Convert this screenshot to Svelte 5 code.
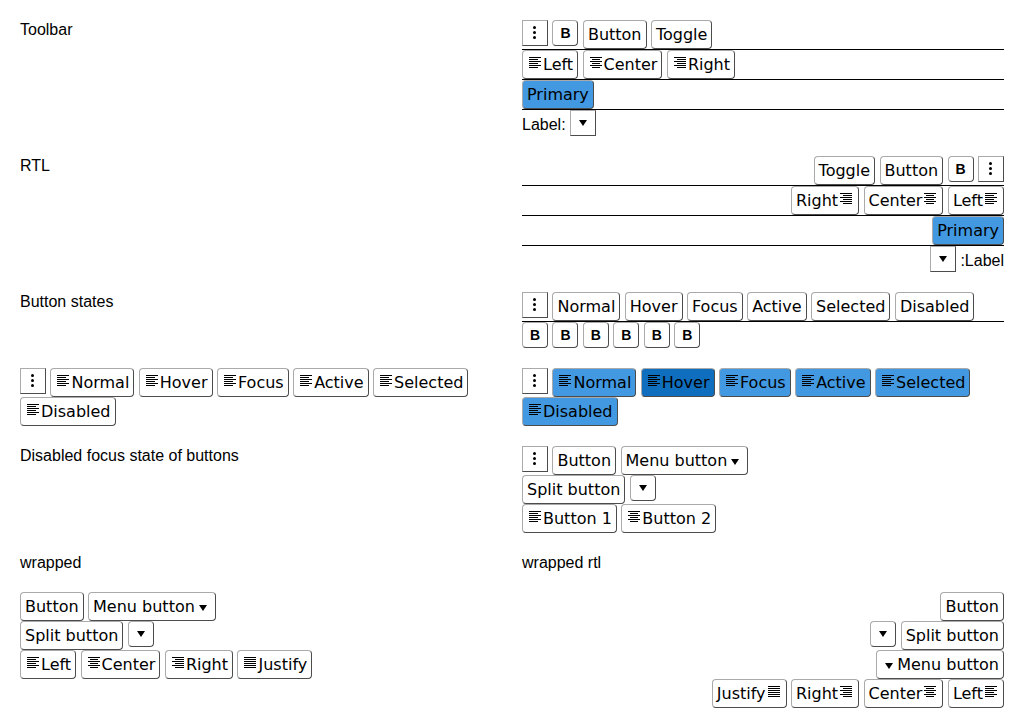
<script>
  const states = ['Normal', 'Hover', 'Focus', 'Active', 'Selected', 'Disabled'];
  const aligns = ['Left', 'Center', 'Right'];

  // Start and length of each line of the alignment icons.
  const lines = {
    left: [[2, 12], [2, 9], [2, 12], [2, 9], [2, 12], [2, 9]],
    center: [[2, 12], [4, 8], [2, 12], [4, 8], [2, 12], [4, 8]],
    right: [[2, 12], [5, 9], [2, 12], [5, 9], [2, 12], [5, 9]],
    justify: [[2, 12], [2, 12], [2, 12], [2, 12], [2, 12], [2, 12]]
  };
</script>

{#snippet icon(name)}
  <svg class="icon" viewBox="0 0 16 16" aria-hidden="true">
    {#if name === 'more'}
      <circle cx="7.5" cy="2.5" r="1.5" />
      <circle cx="7.5" cy="7.5" r="1.5" />
      <circle cx="7.5" cy="12.5" r="1.5" />
    {:else if name === 'caret'}
      <path d="M4 5h8l-4 6z" />
    {:else}
      {#each lines[name] as [x, w], i}
        <rect {x} y={2 + i * 2} width={w} height="1" />
      {/each}
    {/if}
  </svg>
{/snippet}

{#snippet btn(text, name = '', kind = '')}
  <button type="button" class={kind}>{#if name}{@render icon(name)}{/if}{text}</button>{' '}
{/snippet}

{#snippet more()}
  <button type="button" class="square" aria-label="More">{@render icon('more')}</button>{' '}
{/snippet}

{#snippet bold()}
  <button type="button" class="bold">B</button>{' '}
{/snippet}

{#snippet menu()}
  <button type="button" class="menu" aria-haspopup="menu">Menu button{@render icon('caret')}</button>{' '}
{/snippet}

{#snippet split()}
  {@render btn('Split button')}
  <button type="button" aria-label="Open split menu">{@render icon('caret')}</button>
{/snippet}

{#snippet toolbar(dir, id)}
  <div class="toolbar ruled" role="toolbar" {dir}>
    <div class="line">{@render more()}{@render bold()}{@render btn('Button')}{@render btn('Toggle')}</div>
    <div class="line">
      {#each aligns as a}{@render btn(a, a.toLowerCase())}{/each}
    </div>
    <div class="line">{@render btn('Primary', '', 'primary')}</div>
    <div class="line"><label for={id}>Label:</label>{' '}<select {id}><option></option></select></div>
  </div>
{/snippet}

<main>
  <div>Toolbar</div>
  {@render toolbar('ltr', 'select-ltr')}

  <div>RTL</div>
  {@render toolbar('rtl', 'select-rtl')}

  <div>Button states</div>
  <div class="toolbar ruled" role="toolbar">
    <div class="line">
      {@render more()}
      {#each states as s}{@render btn(s)}{/each}
    </div>
    <div class="line">
      {#each states as s}{@render bold()}{/each}
    </div>
  </div>

  <div class="toolbar" role="toolbar">
    <div class="line">
      {@render more()}
      {#each states as s}{@render btn(s, 'left')}{/each}
    </div>
  </div>
  <div class="toolbar" role="toolbar">
    <div class="line">
      {@render more()}
      {#each states as s}{@render btn(s, 'left', s === 'Hover' ? 'primary hover' : 'primary')}{/each}
    </div>
  </div>

  <div>Disabled focus state of buttons</div>
  <div class="toolbar" role="toolbar">
    <div class="line">{@render more()}{@render btn('Button')}{@render menu()}</div>
    <div class="line">{@render split()}</div>
    <div class="line">{@render btn('Button 1', 'left')}{@render btn('Button 2', 'center')}</div>
  </div>

  <div>wrapped</div>
  <div>wrapped rtl</div>

  <div class="toolbar" role="toolbar">
    <div class="line">{@render btn('Button')}{@render menu()}</div>
    <div class="line">{@render split()}</div>
    <div class="line">
      {#each [...aligns, 'Justify'] as a}{@render btn(a, a.toLowerCase())}{/each}
    </div>
  </div>
  <div class="toolbar" role="toolbar" dir="rtl">
    <div class="line">{@render btn('Button')}</div>
    <div class="line">{@render split()}</div>
    <div class="line">{@render menu()}</div>
    <div class="line">
      {#each [...aligns, 'Justify'] as a}{@render btn(a, a.toLowerCase())}{/each}
    </div>
  </div>
</main>

<style>
  main {
    display: grid;
    grid-template-columns: 1fr 1fr;
    gap: 20px;
    padding: 20px;
    font: 16px/19px "Liberation Sans", Arial, sans-serif;
    color: #000;
    background: #fff;
  }

  .ruled .line:not(:last-child) {
    border-bottom: 1px solid #000;
  }

  button,
  select {
    box-sizing: border-box;
    margin: 0;
    padding: 4px;
    border: 1px solid;
    border-color: #aaa #4c4c4c #4c4c4c #aaa;
    border-radius: 4px;
    background: #fff;
    color: #000;
    font: 16px/19px "DejaVu Sans", sans-serif;
    vertical-align: top;
  }

  button {
    display: inline-flex;
    align-items: flex-start;
  }

  .square,
  select {
    border-radius: 0;
  }

  .bold {
    justify-content: center;
    width: 26px;
    font: bold 14px/16px "Liberation Sans", Arial, sans-serif;
  }

  .primary {
    background: #4299e1;
  }

  .hover {
    background: #106ebe;
  }

  .icon {
    display: block;
    flex: none;
    width: 16px;
    height: 16px;
  }

  .menu {
    align-items: flex-end;
  }

  label {
    display: inline-block;
    padding-top: 5px;
    vertical-align: top;
  }

  select {
    appearance: none;
    width: 26px;
    height: 26px;
    background: #fff url("data:image/svg+xml,%3Csvg xmlns='http://www.w3.org/2000/svg' viewBox='0 0 16 16'%3E%3Cpath d='M4 5h8l-4 6z'/%3E%3C/svg%3E") center / 16px 16px no-repeat;
  }

  :global(body) {
    background: #fff;
  }
</style>
